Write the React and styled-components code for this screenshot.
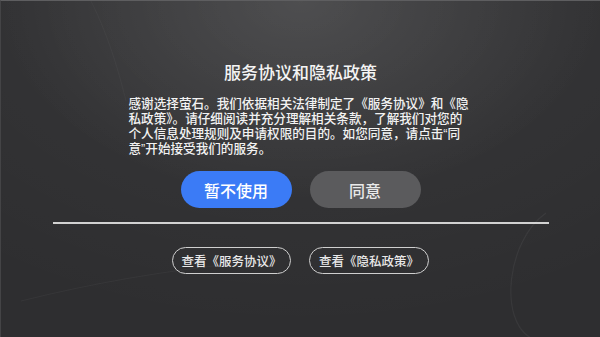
import styled, { createGlobalStyle } from "styled-components";

const Global = createGlobalStyle`
  html, body {
    margin: 0;
    padding: 0;
    background: #2e2e30;
  }
  body {
    font-family: "Liberation Sans", "Noto Sans CJK SC", sans-serif;
  }
`;

const Screen = styled.div`
  position: relative;
  width: 600px;
  height: 337px;
  box-sizing: border-box;
  padding-top: 63px;
  display: flex;
  flex-direction: column;
  align-items: center;
  overflow: hidden;
  border-top: 1px solid #5e5e60;
  border-left: 1px solid #444446;
  background:
    radial-gradient(ellipse 300px 200px at 50% 0%, rgba(255, 255, 255, 0.11), rgba(255, 255, 255, 0) 100%),
    radial-gradient(ellipse 520px 330px at 50% 0%, rgba(255, 255, 255, 0.05), rgba(255, 255, 255, 0) 100%),
    #2e2e30;
  color: #f2f2f2;
`;

const Arcs = styled.svg`
  position: absolute;
  inset: 0;
  pointer-events: none;
`;

const Title = styled.h1`
  margin: 0;
  font-size: 17px;
  line-height: 20px;
  font-weight: 500;
  color: #f4f4f4;
`;

const Body = styled.p`
  margin: 13px 0 0;
  width: 344px;
  font-size: 12.6px;
  line-height: 15px;
  font-weight: 500;
  color: #f2f2f2;
`;

const Actions = styled.div`
  margin-top: 14px;
  display: flex;
  gap: 18px;
`;

const Pill = styled.button`
  width: 111px;
  height: 37px;
  border: none;
  border-radius: 19px;
  font-family: inherit;
  font-size: 16px;
  font-weight: 500;
  color: ${({ $primary }) => ($primary ? "#ffffff" : "#e9e9e9")};
  background: ${({ $primary }) => ($primary ? "#3b7bf6" : "#5b5b5d")};
  padding: 0;
`;

const Divider = styled.hr`
  margin: 14px 0 0;
  width: 496px;
  height: 2px;
  border: none;
  background: #d2d2d2;
`;

const Links = styled.div`
  margin-top: 23px;
  display: flex;
  gap: 18px;
`;

const LinkButton = styled.button`
  width: ${({ $w }) => $w}px;
  height: 27px;
  box-sizing: border-box;
  border: 1.5px solid #cfcfcf;
  border-radius: 14px;
  background: transparent;
  color: #e8e8e8;
  font-family: inherit;
  font-size: 12.5px;
  font-weight: 500;
  padding: 0;
`;

export default function App() {
  return (
    <>
      <Global />
      <Screen>
        <Arcs width="600" height="337" viewBox="0 0 600 337">
          <path d="M545 212 C505 240 498 320 530 337" fill="none" stroke="rgba(255,255,255,0.05)" strokeWidth="1.2" />
          <path d="M20 300 C80 285 160 270 240 262" fill="none" stroke="rgba(255,255,255,0.04)" strokeWidth="1.2" />
          <path d="M90 0 C110 40 120 80 125 100" fill="none" stroke="rgba(255,255,255,0.03)" strokeWidth="1" />
        </Arcs>
        <Title>服务协议和隐私政策</Title>
        <Body>
          感谢选择萤石。我们依据相关法律制定了《服务协议》和《隐私政策》。请仔细阅读并充分理解相关条款，了解我们对您的个人信息处理规则及申请权限的目的。如您同意，请点击“同意”开始接受我们的服务。
        </Body>
        <Actions>
          <Pill $primary>暂不使用</Pill>
          <Pill>同意</Pill>
        </Actions>
        <Divider />
        <Links>
          <LinkButton $w={119}>查看《服务协议》</LinkButton>
          <LinkButton $w={120}>查看《隐私政策》</LinkButton>
        </Links>
      </Screen>
    </>
  );
}
